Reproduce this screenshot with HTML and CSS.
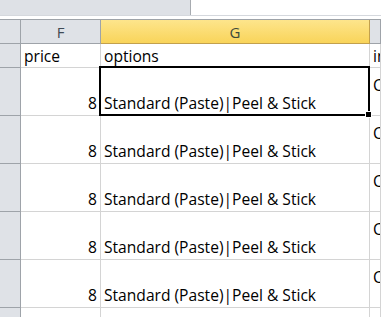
FILE: index.html
```html
<!DOCTYPE html>
<html>
<head>
<title>Sheet</title>
<link rel="stylesheet" href="styles.css">
</head>
<body>
<div class="topbar">
<div class="namebox"></div>
<div class="formula"></div>
</div>
<div class="grid">
<div class="hd corner"></div>
<div class="hd">F</div>
<div class="hd sel">G</div>
<div class="hd"></div>

<div class="rh"></div>
<div class="cell top">price</div>
<div class="cell top">options</div>
<div class="cell top">in</div>

<div class="rh tall"></div>
<div class="cell num">8</div>
<div class="cell txt active">Standard (Paste)|Peel &amp; Stick</div>
<div class="cell more">C</div>

<div class="rh tall"></div>
<div class="cell num">8</div>
<div class="cell txt">Standard (Paste)|Peel &amp; Stick</div>
<div class="cell more">C</div>

<div class="rh tall"></div>
<div class="cell num">8</div>
<div class="cell txt">Standard (Paste)|Peel &amp; Stick</div>
<div class="cell more">C</div>

<div class="rh tall"></div>
<div class="cell num">8</div>
<div class="cell txt">Standard (Paste)|Peel &amp; Stick</div>
<div class="cell more">C</div>

<div class="rh tall"></div>
<div class="cell num">8</div>
<div class="cell txt">Standard (Paste)|Peel &amp; Stick</div>
<div class="cell more">C</div>

<div class="rh tall"></div>
<div class="cell num"></div>
<div class="cell txt"></div>
<div class="cell more"></div>
</div>
</body>
</html>
```

FILE: styles.css
```css
body {
margin: 0;
background: #fff;
font-family: "Open Sans", sans-serif;
font-size: 15.6px;
color: #000;
overflow: hidden;
}
.topbar {
display: flex;
height: 15px;
border-bottom: 1px solid #d5d8dd;
margin-bottom: 3px;
}
.namebox {
width: 190px;
background: #dee1e6;
border-right: 1px solid #a7abb0;
}
.formula {
flex: 1;
}
.grid {
display: grid;
grid-template-columns: 21px 80px 269px 1fr;
grid-template-rows: 24px 24px repeat(6, 48px);
border-top: 1px solid #9ea3a9;
}
.hd {
background: #dfe2e7;
border-right: 1px solid #9ea3a9;
border-bottom: 1px solid #9ea3a9;
display: flex;
align-items: center;
justify-content: center;
color: #3f4a55;
font-size: 15px;
}
.hd.sel {
background: linear-gradient(#fde58c, #f9d45a);
border-right-color: #c2a04d;
border-bottom-color: #c2a04d;
color: #3d4a3a;
}
.rh {
background: #dfe2e7;
border-right: 1px solid #9ea3a9;
border-bottom: 1px solid #9ea3a9;
}
.cell {
border-right: 1px solid #d4d4d4;
border-bottom: 1px solid #d4d4d4;
display: flex;
align-items: flex-end;
padding: 0 3px 2px;
white-space: nowrap;
overflow: hidden;
line-height: 20px;
}
.cell.top {
align-items: center;
padding-bottom: 0;
}
.cell.num {
justify-content: flex-end;
}
.cell.more {
align-items: flex-start;
padding-top: 7px;
}
.active {
position: relative;
overflow: visible;
}
.active::after {
content: "";
position: absolute;
left: -2px;
top: -2px;
right: -1px;
bottom: -1px;
border: 2px solid #000;
}
.active::before {
content: "";
position: absolute;
right: -3px;
bottom: -3px;
width: 5px;
height: 5px;
background: #000;
border: 1px solid #fff;
z-index: 2;
}
```
